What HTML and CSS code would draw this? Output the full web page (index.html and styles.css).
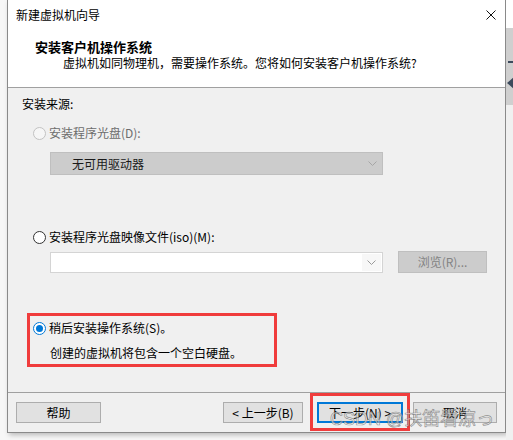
FILE: index.html
```html
<!DOCTYPE html>
<html lang="zh-CN">
<head>
  <meta charset="UTF-8" />
  <title>新建虚拟机向导</title>
  <link rel="stylesheet" href="styles.css">
</head>
<body>
  <div class="screen">
    <div class="dialog">
      <div class="titlebar">
        <span>新建虚拟机向导</span>
        <svg class="close" width="10" height="10" viewBox="0 0 10 10"><path d="M0.5 0.5L9.5 9.5M9.5 0.5L0.5 9.5" stroke="#111" stroke-width="1" fill="none"/></svg>
      </div>
      <div class="header">
        <div class="h-title">安装客户机操作系统</div>
        <div class="h-sub">虚拟机如同物理机，需要操作系统。您将如何安装客户机操作系统?</div>
      </div>
      <div class="body">
        <div class="group-label">安装来源:</div>
        <div class="radio disabled"><span class="circle"></span>安装程序光盘(D):</div>
        <div class="combo disabled">
          <span class="combo-text">无可用驱动器</span>
          <svg class="chev" width="9" height="5" viewBox="0 0 9 5"><polyline points="0.5,0.5 4.5,4.5 8.5,0.5" stroke="#a6a6a6" fill="none"/></svg>
        </div>
        <div class="radio"><span class="circle"></span>安装程序光盘映像文件(iso)(M):</div>
        <div class="iso-row">
          <div class="combo iso">
            <span class="field"></span>
            <span class="arrow"><svg width="9" height="5" viewBox="0 0 9 5"><polyline points="0.5,0.5 4.5,4.5 8.5,0.5" stroke="#9a9a9a" fill="none"/></svg></span>
          </div>
          <div class="btn browse">浏览(R)...</div>
        </div>
        <div class="mark">
          <div class="radio checked"><span class="circle"></span>稍后安装操作系统(S)。</div>
          <div class="note">创建的虚拟机将包含一个空白硬盘。</div>
        </div>
      </div>
      <div class="footer">
        <div class="btn help">帮助</div>
        <div class="btn back">&lt; 上一步(B)</div>
        <div class="next-wrap">
          <div class="btn next">下一步(N) &gt;</div>
          <span class="next-mark"></span>
        </div>
        <div class="btn cancel">取消</div>
        <div class="watermark">CSDN @扶笛看凉っ</div>
      </div>
    </div>
    <div class="side"><span class="dash"></span><span class="arrow-l"></span></div>
  </div>
</body>
</html>
```

FILE: styles.css
```css
body { margin: 0; background: #f7f7f7; font-family: "Noto Sans CJK SC", "Microsoft YaHei", sans-serif; font-size: 12px; color: #000; }
.screen { display: flex; padding-left: 7px; height: 440px; overflow: hidden; }
.dialog { width: 499px; height: 433px; box-sizing: border-box; border: 1px solid #8a8a8a; border-top: none; background: #f0f0f0; box-shadow: 2px 2px 5px rgba(0,0,0,.25); display: flex; flex-direction: column; }
.titlebar { height: 30px; line-height: 30px; background: #fff; display: flex; justify-content: space-between; align-items: center; padding: 0 9px 0 8px; }
.close { display: block; }
.header { height: 48px; background: #fff; border-bottom: 1px solid #a0a0a0; padding-top: 9px; }
.h-title { font-size: 13px; font-weight: bold; line-height: 16px; padding-left: 27px; }
.h-sub { line-height: 15px; padding-left: 55px; }
.body { height: 305px; box-sizing: border-box; border-bottom: 1px solid #a0a0a0; }
.group-label { margin: 8px 0 0 14px; line-height: 16px; }
.radio { display: flex; align-items: center; height: 16px; line-height: 16px; margin-left: 25px; }
.body > .radio:nth-of-type(2) { margin-top: 13px; }
.circle { width: 13px; height: 13px; box-sizing: border-box; border: 1px solid #333; border-radius: 50%; background: #fff; margin-right: 3px; display: flex; align-items: center; justify-content: center; }
.radio.disabled { color: #6d6d6d; }
.radio.disabled .circle { border-color: #c2c2c2; background: #f6f6f6; }
.radio.checked .circle { border-color: #0078d7; }
.radio.checked .circle::after { content: ""; width: 7px; height: 7px; border-radius: 50%; background: #0078d7; }
.combo { display: flex; align-items: center; box-sizing: border-box; margin-left: 42px; width: 333px; }
.combo.disabled { margin-top: 11px; height: 23px; background: #cccccc; border: 1px solid #bfbfbf; justify-content: space-between; padding: 0 5px 0 21px; margin-bottom: 54px; }
.combo-text { color: #1a1a1a; }
.iso-row { display: flex; align-items: flex-end; margin-top: 6px; }
.combo.iso { height: 21px; border: 1px solid #d4d4d4; background: #fff; padding: 1px; }
.field { flex: 1; height: 100%; background: #fff; }
.arrow { width: 19px; height: 100%; background: #f7f7f7; display: flex; align-items: center; justify-content: center; }
.btn { height: 21px; line-height: 19px; box-sizing: border-box; border: 1px solid #adadad; background: #e1e1e1; text-align: center; }
.browse { width: 89px; height: 22px; line-height: 20px; margin-left: 15px; background: #cccccc; border-color: #bfbfbf; color: #838383; }
.mark { margin: 40px 0 0 19px; width: 250px; height: 54px; box-sizing: border-box; border: 3px solid #f03c3c; padding: 4px 0 0 3px; }
.mark .radio { margin-left: 0; }
.note { margin: 9px 0 0 17px; line-height: 16px; }
.footer { position: relative; flex: 1; display: flex; padding: 9px 8px 0; }
.help { width: 85px; }
.back { width: 80px; margin-left: auto; }
.next-wrap { position: relative; margin-left: 14px; }
.next { width: 86px; border: 2px solid #0078d7; line-height: 17px; }
.next-mark { position: absolute; left: -7px; top: -9px; width: 100px; height: 38px; box-sizing: border-box; border: 3px solid #f03c3c; }
.cancel { width: 84px; margin-left: 10px; }
.watermark { position: absolute; left: 322px; top: 16px; font-family: "Liberation Sans", "Noto Sans CJK SC", sans-serif; font-size: 18px; line-height: 20px; color: rgba(255,255,255,.6); -webkit-text-stroke: 0.7px rgba(80,80,80,.6); white-space: nowrap; pointer-events: none; }
.side { position: relative; flex: 1; background: linear-gradient(#ffffff 0 28px, #cfcfcf 28px 105px, #f0f0f0 105px); }
.dash { position: absolute; left: 2px; top: 61px; width: 6px; height: 2px; background: #3c4a5c; }
.arrow-l { position: absolute; left: 1px; top: 77px; width: 0; height: 0; border-top: 6px solid transparent; border-bottom: 6px solid transparent; border-right: 7px solid #3c4a5c; }
```
